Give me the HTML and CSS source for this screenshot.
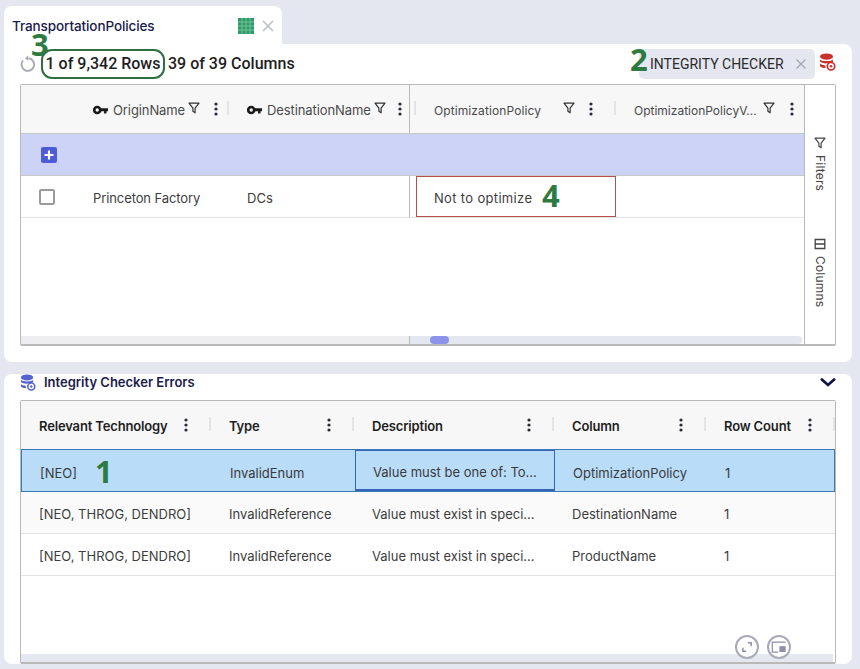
FILE: index.html
```html
<!DOCTYPE html>
<html lang="en">
<head>
<meta charset="utf-8">
<title>TransportationPolicies</title>
<link rel="stylesheet" href="styles.css">
</head>
<body>
<svg class="defs" width="0" height="0" aria-hidden="true">
  <symbol id="key" viewBox="0 0 16 10"><circle cx="4.5" cy="5" r="3.2" fill="none" stroke="currentColor" stroke-width="2.8"/><path d="M7.5 3.2H16V6.2H14.4V8.6H11.8V6.2H7.5Z" fill="currentColor"/></symbol>
  <symbol id="filter" viewBox="0 0 12 12"><path d="M1 1.2H11L7.1 6.2V10.8L4.9 9.3V6.2Z" fill="none" stroke="currentColor" stroke-width="1.2" stroke-linejoin="round"/></symbol>
  <symbol id="kebab" viewBox="0 0 4 14"><circle cx="2" cy="2" r="1.6" fill="currentColor"/><circle cx="2" cy="7" r="1.6" fill="currentColor"/><circle cx="2" cy="12" r="1.6" fill="currentColor"/></symbol>
  <symbol id="db" viewBox="0 0 17 18"><ellipse cx="7.5" cy="3.6" rx="6.5" ry="3.2" fill="currentColor"/><path d="M1 6.4C2.5 8.4 12.5 8.4 14 6.4V8.6C12.5 10 8 10.4 7 10.4 4.5 10.4 2 9.8 1 8.6Z" fill="currentColor"/><path d="M1 10.6C2 11.7 4 12.2 6 12.4L6.6 15C4 15 2 14.3 1 13.2Z" fill="currentColor"/><circle cx="12" cy="13.2" r="3.7" fill="none" stroke="currentColor" stroke-width="1.7"/><circle cx="12" cy="13.2" r="1.3" fill="currentColor"/></symbol>
</svg>

<main class="page">
  <div class="tab">
    <span class="tab-title">TransportationPolicies</span>
    <svg class="tab-grid" viewBox="0 0 16 16"><rect width="16" height="16" fill="#2f9b68"/><path d="M0 4H16M0 8H16M0 12H16M4 0V16M8 0V16M12 0V16" stroke="#7fcba5" stroke-width=".8"/></svg>
    <svg class="tab-close" viewBox="0 0 12 12"><path d="M1 1L11 11M11 1L1 11" stroke="currentColor" stroke-width="1.6"/></svg>
  </div>

  <section class="panel panel-top">
    <div class="toolbar">
      <svg class="refresh" viewBox="0 0 16 16"><path d="M8.6 2.8A6.3 6.3 0 1 1 3 5" fill="none" stroke="currentColor" stroke-width="1.9"/><path d="M8.2 0V5.4L5 2.7Z" fill="currentColor"/></svg>
      <span class="rows-pill">1 of 9,342 Rows</span>
      <span class="count">39 of 39 Columns</span>
      <span class="chip">INTEGRITY CHECKER<svg class="chip-x" viewBox="0 0 12 12"><path d="M1.5 1.5L10.5 10.5M10.5 1.5L1.5 10.5" stroke="currentColor" stroke-width="1.4"/></svg></span>
      <svg class="db db-red"><use href="#db"/></svg>
    </div>

    <div class="grid grid-top">
      <div class="grid-main">
        <div class="row head top-cols">
          <div class="h-cell c-check"></div>
          <div class="h-cell c-origin"><svg class="key"><use href="#key"/></svg><span>OriginName</span><svg class="filter"><use href="#filter"/></svg><svg class="kebab push"><use href="#kebab"/></svg><i class="sep"></i></div>
          <div class="h-cell c-dest"><svg class="key"><use href="#key"/></svg><span>DestinationName</span><svg class="filter"><use href="#filter"/></svg><svg class="kebab push"><use href="#kebab"/></svg></div>
          <div class="h-cell c-opt"><i class="sep sep-lead"></i><span>OptimizationPolicy</span><svg class="filter push"><use href="#filter"/></svg><svg class="kebab k-gap"><use href="#kebab"/></svg><i class="sep sep-opt"></i></div>
          <div class="h-cell c-optv"><span>OptimizationPolicyV...</span><svg class="filter"><use href="#filter"/></svg><svg class="kebab k-gap"><use href="#kebab"/></svg></div>
        </div>
        <div class="add-row"><div class="add-pin"><span class="add-btn"><svg viewBox="0 0 16 16"><path d="M8 3.5V12.5M3.5 8H12.5" stroke="#fff" stroke-width="2.2"/></svg></span></div></div>
        <div class="row data top-cols">
          <div class="cell c-check"><span class="checkbox"></span></div>
          <div class="cell c-origin">Princeton Factory</div>
          <div class="cell c-dest">DCs</div>
          <div class="cell c-opt"><span class="error-cell">Not to optimize</span></div>
          <div class="cell c-optv"></div>
        </div>
        <div class="spacer"></div>
        <div class="scroll-top"><div class="scroll-pin"></div><div class="scroll-track"><span class="thumb"></span></div></div>
      </div>
      <aside class="side">
        <div class="side-btn b-filter"><svg class="side-ic"><use href="#filter"/></svg><span>Filters</span></div>
        <div class="side-btn b-cols"><svg class="side-ic" viewBox="0 0 12 12"><path d="M1.2 1.5H10.8V10.5H1.2ZM1.2 6H10.8" fill="none" stroke="currentColor" stroke-width="1.3"/></svg><span>Columns</span></div>
      </aside>
    </div>
  </section>

  <section class="panel panel-bottom">
    <header class="sub-head">
      <svg class="db db-blue"><use href="#db"/></svg>
      <h2>Integrity Checker Errors</h2>
      <svg class="chevron" viewBox="0 0 18 10"><path d="M2 1.8L9 8L16 1.8" fill="none" stroke="currentColor" stroke-width="2.8"/></svg>
    </header>
    <div class="grid grid-bottom">
      <div class="row head bottom-cols">
        <div class="h-cell b-head"><span>Relevant Technology</span><svg class="kebab push"><use href="#kebab"/></svg><i class="sep"></i></div>
        <div class="h-cell b-head"><span>Type</span><svg class="kebab push"><use href="#kebab"/></svg><i class="sep"></i></div>
        <div class="h-cell b-head"><span>Description</span><svg class="kebab push"><use href="#kebab"/></svg><i class="sep"></i></div>
        <div class="h-cell b-head"><span>Column</span><svg class="kebab push"><use href="#kebab"/></svg><i class="sep"></i></div>
        <div class="h-cell b-head"><span>Row Count</span><svg class="kebab push"><use href="#kebab"/></svg><i class="sep"></i></div>
      </div>
      <div class="row data bottom-cols selected">
        <div class="cell">[NEO]</div>
        <div class="cell">InvalidEnum</div>
        <div class="cell focus">Value must be one of: To...</div>
        <div class="cell">OptimizationPolicy</div>
        <div class="cell">1</div>
      </div>
      <div class="row data bottom-cols odd">
        <div class="cell">[NEO, THROG, DENDRO]</div>
        <div class="cell">InvalidReference</div>
        <div class="cell">Value must exist in speci...</div>
        <div class="cell">DestinationName</div>
        <div class="cell">1</div>
      </div>
      <div class="row data bottom-cols">
        <div class="cell">[NEO, THROG, DENDRO]</div>
        <div class="cell">InvalidReference</div>
        <div class="cell">Value must exist in speci...</div>
        <div class="cell">ProductName</div>
        <div class="cell">1</div>
      </div>
      <div class="spacer"></div>
      <div class="scroll-bottom"></div>
    </div>
  </section>

  <div class="float-btns">
    <span class="round"><svg viewBox="0 0 24 24"><path d="M13 7H17V11M11 17H7V13" fill="none" stroke="currentColor" stroke-width="1.8"/></svg></span>
    <span class="round"><svg viewBox="0 0 24 24"><path d="M20 6H4V18H11" fill="none" stroke="currentColor" stroke-width="1.5"/><rect x="12.5" y="11" width="7.5" height="7" fill="currentColor"/></svg></span>
  </div>

  <span class="mark m1">1</span>
  <span class="mark m2">2</span>
  <span class="mark m3">3</span>
  <span class="mark m4">4</span>
</main>
</body>
</html>
```
FILE: styles.css
```css
* { box-sizing: border-box; }
html, body { margin: 0; height: 669px; overflow: hidden; }
body { background: #e4e7f0; font-family: Inter, "Liberation Sans", sans-serif; font-size: 13px; color: #3d3d3d; }
.defs { position: absolute; }
.page { position: relative; width: 860px; height: 669px; padding: 6px 8px 0 4px; display: flex; flex-direction: column; }

.tab { width: 278px; height: 38px; background: #fff; border-radius: 8px 8px 0 0; display: flex; align-items: center; padding: 0 8px; }
.tab-title { font-size: 13.5px; font-weight: 500; color: #1b1b4b; letter-spacing: -.1px; margin-top: 2px; }
.tab-grid { width: 16px; height: 16px; margin-left: auto; margin-top: 2px; }
.tab-close { width: 12px; height: 12px; margin-left: 8px; margin-top: 2px; color: #bcc0c9; }

.panel { background: #fff; width: 848px; padding: 0 16px; }
.panel-top { height: 318px; border-radius: 0 8px 8px 8px; }
.panel-bottom { height: 290px; margin-top: 12px; border-radius: 8px; position: relative; }

.toolbar { height: 40px; display: flex; align-items: center; font-family: Roboto, sans-serif; font-size: 16px; line-height: 18px; font-weight: 500; color: #1e1e1e; }
.refresh { width: 16px; height: 17px; color: #a7a9b0; margin-top: -2px; }
.rows-pill { height: 30px; width: 124px; margin-left: 5px; border: 2.5px solid #2f6f3f; border-radius: 11px; display: flex; align-items: center; justify-content: center; white-space: nowrap; }
.count { margin-left: 3px; }
.chip { margin-left: auto; width: 176px; height: 30px; background: #e4e7f0; border-radius: 5px; display: flex; align-items: center; padding-left: 11px; font-size: 14px; font-weight: 400; color: #2b2b2b; white-space: nowrap; }
.chip-x { width: 12px; height: 12px; margin-left: 11px; color: #a6a9b3; }
.db { width: 17px; height: 18px; display: block; }
.db-red { color: #c9302c; margin-left: 4px; margin-top: -4px; }
.db-blue { color: #5562d2; width: 16px; height: 17px; }

.grid { border: 1px solid #b9b9b9; border-bottom-width: 2px; background: #fff; border-radius: 2px; }
.grid-top { width: 816px; height: 262px; display: flex; }
.grid-main { flex: 1; display: flex; flex-direction: column; min-width: 0; }
.side { width: 31px; border-left: 1px solid #b9b9b9; position: relative; color: #444; font-size: 12px; display: flex; flex-direction: column; align-items: center; padding-top: 52px; }
.side-btn { display: flex; flex-direction: column; align-items: center; gap: 6px; }
.side-btn span { writing-mode: vertical-rl; letter-spacing: .2px; }
.side-ic { width: 12px; height: 12px; }
.b-cols { margin-top: 47px; }

.row { display: grid; }
.top-cols { grid-template-columns: 72px 154px 163px 200px 194px; }
.bottom-cols { grid-template-columns: 190px 143px 200px 152px 129px; }
.head { height: 49px; background: #f7f7f8; border-bottom: 1px solid #c8c8c8; }
.data { height: 42px; border-bottom: 1px solid #e3e3e3; }

.h-cell { display: flex; align-items: center; color: #4a4a4a; white-space: nowrap; position: relative; min-width: 0; padding-top: 2px; letter-spacing: -.1px; }
.h-cell .key { width: 15px; height: 10px; color: #1a1a1a; margin-right: 5px; }
.h-cell .filter { width: 12px; height: 12px; color: #333; margin-left: 3px; margin-top: -4px; flex: none; }
.kebab { width: 4px; height: 14px; color: #2a2a3a; flex: none; margin-top: -3px; }
.push { margin-left: auto; }
.k-gap { margin-left: 15px; }
.sep { position: absolute; top: 16px; height: 14px; width: 2px; background: #e4e4e8; }

.c-origin .sep { right: 18px; }
.c-origin .kebab { margin-right: 29px; }
.c-dest { border-right: 1px solid #b9b9b9; }
.c-dest .kebab { margin-right: 7px; }
.c-dest .filter { margin-left: 3px; }
.h-cell.c-opt { padding-left: 24px; font-size: 12px; letter-spacing: .1px; }
.c-opt .filter.push { margin-left: auto; margin-right: 0; }
.c-opt .kebab { margin-left: 14px; margin-right: 17px; }
.sep-lead { left: 4px; }
.sep-opt { right: -6px; }
.h-cell.c-optv { padding-left: 24px; font-size: 12px; letter-spacing: 0; }
.c-optv .filter { margin-left: 6px; }
.c-optv .kebab { margin-left: 15px; }

.cell { display: flex; align-items: center; white-space: nowrap; min-width: 0; padding-top: 2px; }
.top-cols .c-dest.cell { border-right: 1px solid #b9b9b9; }
.cell.c-origin { letter-spacing: -.1px; }
.cell.c-check { padding-left: 18px; padding-top: 1px; }
.checkbox { width: 16px; height: 16px; border: 2px solid #9b9b9b; border-radius: 2px; background: #fff; }
.cell.c-opt { padding-left: 6px; padding-top: 0; }
.error-cell { width: 200px; height: 41px; border: 1px solid #b8504a; padding: 2px 0 0 17px; display: flex; align-items: center; flex: none; letter-spacing: .33px; }

.add-row { height: 42px; background: #cdd3f6; border-bottom: 1px solid #c8c8c8; display: flex; align-items: center; }
.add-pin { padding-left: 20px; display: flex; }
.add-btn { width: 16px; height: 16px; background: #4d5bd6; border-radius: 2px; display: block; }
.add-btn svg { display: block; width: 16px; height: 16px; }

.spacer { flex: 1; }
.scroll-top { height: 8px; display: flex; }
.scroll-pin { width: 389px; background: #eeeef1; border-right: 1px solid #bcbcbc; }
.scroll-track { flex: 1; background: #e4e7f0; border-radius: 0 4px 4px 0; margin-right: 2px; padding-left: 20px; }
.thumb { display: block; width: 19px; height: 8px; background: #8d93e8; border-radius: 4px; }

.sub-head { height: 16px; margin-bottom: 10px; display: flex; align-items: center; }
.sub-head h2 { margin: 0 0 0 8px; font-size: 13px; font-weight: 600; color: #1b1b4b; }
.chevron { width: 18px; height: 10px; margin-left: auto; margin-right: -1px; color: #14144a; }

.grid-bottom { width: 816px; height: 264px; display: flex; flex-direction: column; }
.b-head { padding-left: 18px; color: #1e1e1e; font-weight: 600; letter-spacing: -.15px; }
.b-head .kebab { margin-right: 23px; }
.b-head .sep { right: 0; }
.bottom-cols .cell { padding-left: 18px; }
.odd { background: #fafafa; }
.selected { background: #b9dcf9; border: 1px solid #3f78b8; margin: -1px 0 0; height: 43px; grid-template-columns: 190px 143px 200px 152px 127px; }
.selected .cell { color: #3a3a3a; padding-top: 4px; }
.bottom-cols .focus { border: 1px solid #3565b8; border-bottom-width: 2px; padding-left: 17px; height: 41px; }
.scroll-bottom { height: 8px; background: #e5e8f0; margin-right: 2px; }

.float-btns { position: absolute; left: 735px; top: 635px; display: flex; gap: 8px; }
.round { width: 24px; height: 24px; border-radius: 50%; border: 2px solid #a9a9b8; background: rgba(255,255,255,.8); color: #8f8fa8; display: block; }
.round svg { display: block; width: 20px; height: 20px; }

.mark { position: absolute; font-family: "Open Sans", sans-serif; font-weight: 700; font-size: 31px; line-height: 1; color: #2e7b41; }
.m1 { left: 95px; top: 456px; }
.m2 { left: 630px; top: 44px; }
.m3 { left: 31px; top: 29px; }
.m4 { left: 542px; top: 180px; }
```
